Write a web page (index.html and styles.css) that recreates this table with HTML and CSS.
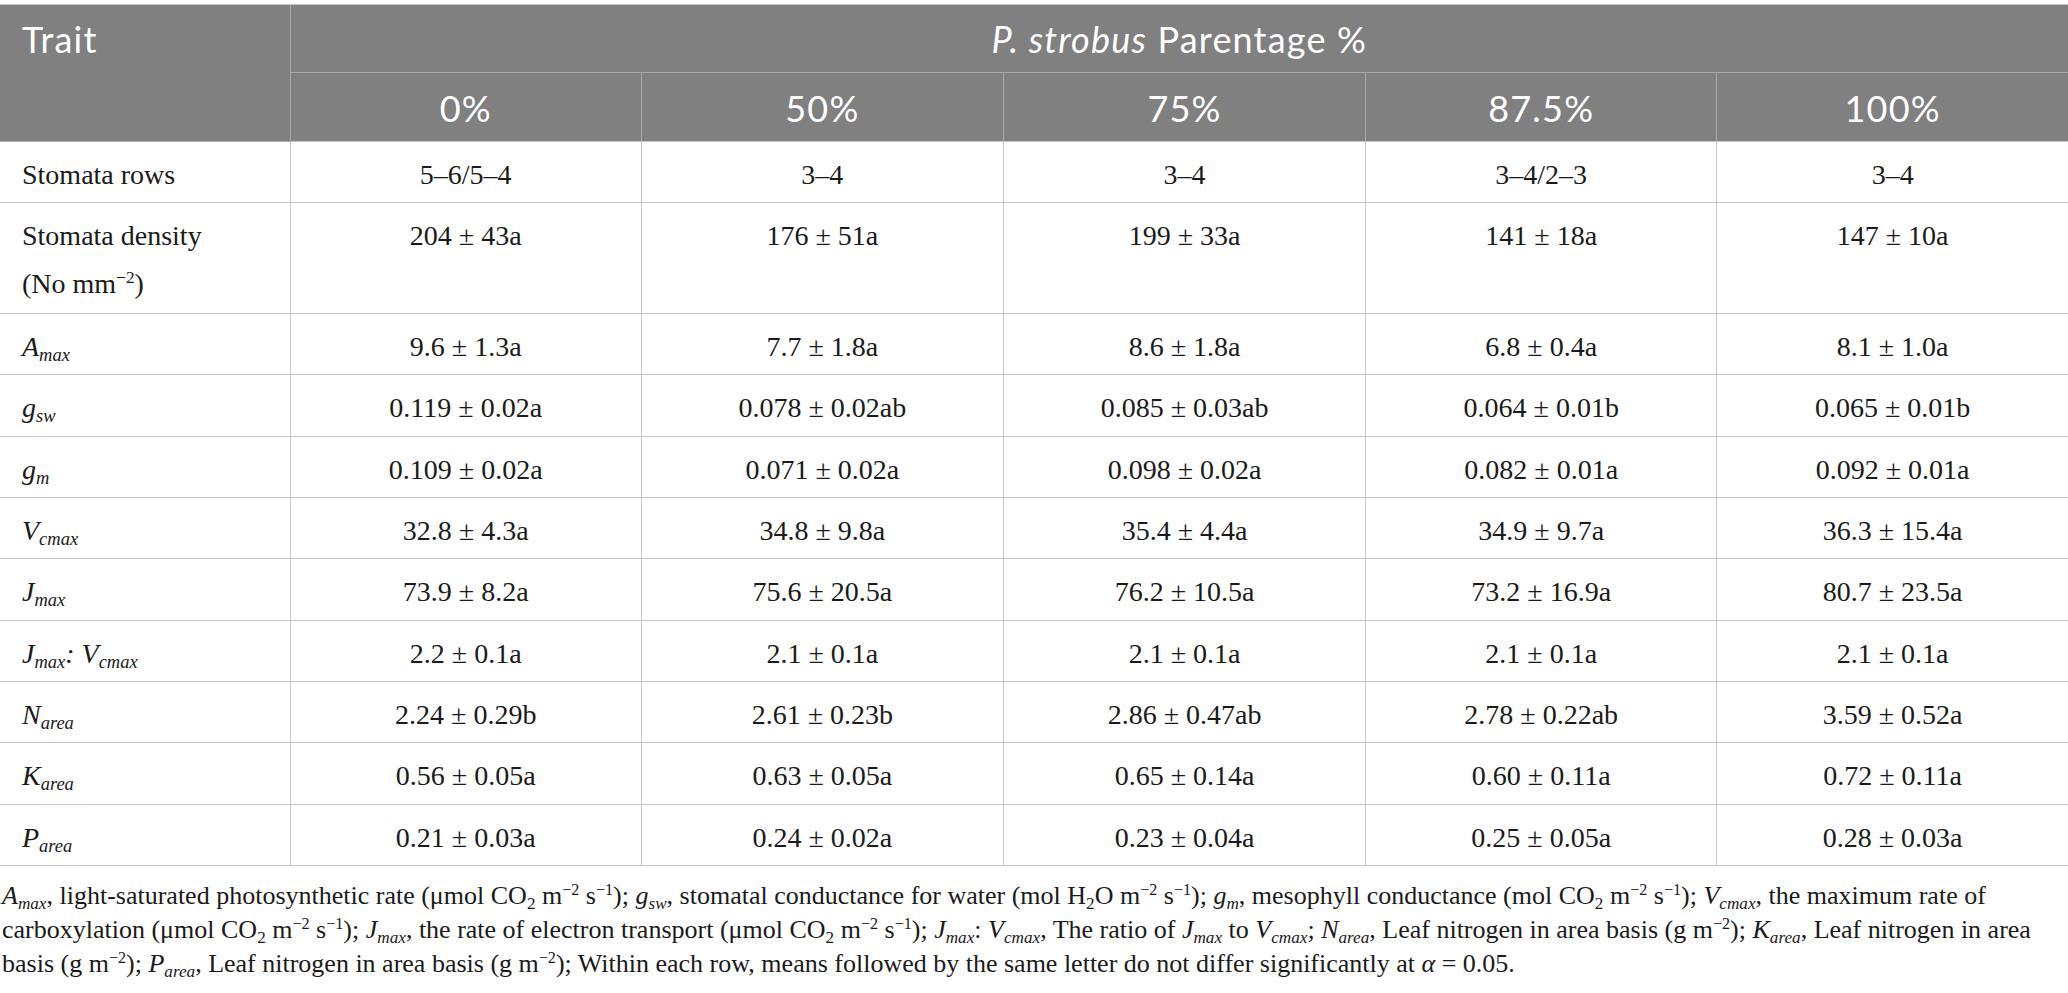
FILE: index.html
```html
<!DOCTYPE html>
<html lang="en">
<head>
<meta charset="utf-8">
<title>Table</title>
<link rel="stylesheet" href="styles.css">
</head>
<body>
<table class="data">
  <colgroup>
    <col class="c-trait">
    <col class="c-a">
    <col class="c-b">
    <col class="c-b">
    <col class="c-a">
    <col class="c-a">
  </colgroup>
  <thead>
    <tr class="h1">
      <th rowspan="2" class="trait">Trait</th>
      <th colspan="5" class="span"><i>P. strobus</i> Parentage %</th>
    </tr>
    <tr class="h2">
      <th>0%</th>
      <th>50%</th>
      <th>75%</th>
      <th>87.5%</th>
      <th>100%</th>
    </tr>
  </thead>
  <tbody>
    <tr>
      <td class="lbl">Stomata rows</td>
      <td>5–6/5–4</td><td>3–4</td><td>3–4</td><td>3–4/2–3</td><td>3–4</td>
    </tr>
    <tr class="tall">
      <td class="lbl">Stomata density<br>(No mm<sup>−2</sup>)</td>
      <td>204 ± 43a</td><td>176 ± 51a</td><td>199 ± 33a</td><td>141 ± 18a</td><td>147 ± 10a</td>
    </tr>
    <tr>
      <td class="lbl"><i>A<sub>max</sub></i></td>
      <td>9.6 ± 1.3a</td><td>7.7 ± 1.8a</td><td>8.6 ± 1.8a</td><td>6.8 ± 0.4a</td><td>8.1 ± 1.0a</td>
    </tr>
    <tr>
      <td class="lbl"><i>g<sub>sw</sub></i></td>
      <td>0.119 ± 0.02a</td><td>0.078 ± 0.02ab</td><td>0.085 ± 0.03ab</td><td>0.064 ± 0.01b</td><td>0.065 ± 0.01b</td>
    </tr>
    <tr>
      <td class="lbl"><i>g<sub>m</sub></i></td>
      <td>0.109 ± 0.02a</td><td>0.071 ± 0.02a</td><td>0.098 ± 0.02a</td><td>0.082 ± 0.01a</td><td>0.092 ± 0.01a</td>
    </tr>
    <tr>
      <td class="lbl"><i>V<sub>cmax</sub></i></td>
      <td>32.8 ± 4.3a</td><td>34.8 ± 9.8a</td><td>35.4 ± 4.4a</td><td>34.9 ± 9.7a</td><td>36.3 ± 15.4a</td>
    </tr>
    <tr>
      <td class="lbl"><i>J<sub>max</sub></i></td>
      <td>73.9 ± 8.2a</td><td>75.6 ± 20.5a</td><td>76.2 ± 10.5a</td><td>73.2 ± 16.9a</td><td>80.7 ± 23.5a</td>
    </tr>
    <tr>
      <td class="lbl"><i>J<sub>max</sub>: V<sub>cmax</sub></i></td>
      <td>2.2 ± 0.1a</td><td>2.1 ± 0.1a</td><td>2.1 ± 0.1a</td><td>2.1 ± 0.1a</td><td>2.1 ± 0.1a</td>
    </tr>
    <tr>
      <td class="lbl"><i>N<sub>area</sub></i></td>
      <td>2.24 ± 0.29b</td><td>2.61 ± 0.23b</td><td>2.86 ± 0.47ab</td><td>2.78 ± 0.22ab</td><td>3.59 ± 0.52a</td>
    </tr>
    <tr>
      <td class="lbl"><i>K<sub>area</sub></i></td>
      <td>0.56 ± 0.05a</td><td>0.63 ± 0.05a</td><td>0.65 ± 0.14a</td><td>0.60 ± 0.11a</td><td>0.72 ± 0.11a</td>
    </tr>
    <tr>
      <td class="lbl"><i>P<sub>area</sub></i></td>
      <td>0.21 ± 0.03a</td><td>0.24 ± 0.02a</td><td>0.23 ± 0.04a</td><td>0.25 ± 0.05a</td><td>0.28 ± 0.03a</td>
    </tr>
  </tbody>
</table>
<p class="caption"><i>A<sub>max</sub></i>, light-saturated photosynthetic rate (μmol CO<sub>2</sub> m<sup>−2</sup> s<sup>−1</sup>); <i>g<sub>sw</sub></i>, stomatal conductance for water (mol H<sub>2</sub>O m<sup>−2</sup> s<sup>−1</sup>); <i>g<sub>m</sub></i>, mesophyll conductance (mol CO<sub>2</sub> m<sup>−2</sup> s<sup>−1</sup>); <i>V<sub>cmax</sub></i>, the maximum rate of carboxylation (μmol CO<sub>2</sub> m<sup>−2</sup> s<sup>−1</sup>); <i>J<sub>max</sub></i>, the rate of electron transport (μmol CO<sub>2</sub> m<sup>−2</sup> s<sup>−1</sup>); <i>J<sub>max</sub></i>: <i>V<sub>cmax</sub></i>, The ratio of <i>J<sub>max</sub></i> to <i>V<sub>cmax</sub></i>; <i>N<sub>area</sub></i>, Leaf nitrogen in area basis (g m<sup>−2</sup>); <i>K<sub>area</sub></i>, Leaf nitrogen in area basis (g m<sup>−2</sup>); <i>P<sub>area</sub></i>, Leaf nitrogen in area basis (g m<sup>−2</sup>); Within each row, means followed by the same letter do not differ significantly at <i>α</i> = 0.05.</p>
</body>
</html>
```

FILE: styles.css
```css
html, body {
  margin: 0;
  padding: 0;
  background: #ffffff;
}

body {
  padding-top: 4px;
  color: #1a1a1a;
  font-family: "Liberation Serif", "Times New Roman", serif;
}

.data {
  width: 2068px;
  table-layout: fixed;
  border-collapse: collapse;
  border-top: 1px solid #c6c6c6;
}

.c-trait { width: 290px; }
.c-a { width: 351px; }
.c-b { width: 362px; }

.data th {
  background: #808080;
  color: #ffffff;
  font-family: Lato, "Open Sans", sans-serif;
  font-weight: 400;
  font-size: 36px;
  letter-spacing: 1.2px;
  line-height: 48px;
  text-align: center;
  vertical-align: top;
  padding: 10px 10px 9px;
  border: 1px solid #a9a9a9;
  border-top: none;
}

.data th.trait {
  text-align: left;
  padding-left: 22px;
  border-left: none;
}

.data th.span {
  border-right: none;
}

.data .h2 th:last-child {
  border-right: none;
}

.data .h2 th {
  padding-top: 11px;
  padding-bottom: 9px;
  border-bottom: 1px solid #c6c6c6;
}

.data td {
  font-size: 28px;
  line-height: 47.33px;
  padding: 9px 10px 4px;
  text-align: center;
  vertical-align: top;
  border: 1px solid #c6c6c6;
}

.data td:first-child {
  border-left: none;
}

.data td:last-child {
  border-right: none;
}

.data td.lbl {
  text-align: left;
  padding-left: 22px;
}

.data tr.tall td {
  padding-bottom: 6px;
}

.data sub {
  font-size: 0.66em;
  line-height: 0;
  vertical-align: -0.28em;
}

.data sup {
  font-size: 0.62em;
  line-height: 0;
  vertical-align: 0.55em;
}

.caption {
  margin: 13px 0 0;
  padding: 0 2px;
  font-size: 26px;
  line-height: 34px;
  color: #1a1a1a;
}

.caption sub {
  font-size: 0.66em;
  line-height: 0;
  vertical-align: -0.28em;
}

.caption sup {
  font-size: 0.62em;
  line-height: 0;
  vertical-align: 0.55em;
}
```
